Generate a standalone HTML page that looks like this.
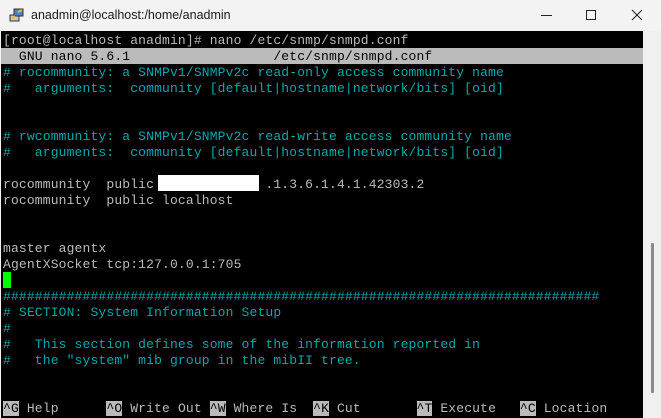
<!DOCTYPE html>
<html><head><meta charset="utf-8"><style>
html,body{margin:0;padding:0;width:661px;height:418px;overflow:hidden;background:#f3f3f3;}
#title{position:absolute;left:0;top:0;width:661px;height:31px;background:#f3f3f3;font-family:"Liberation Sans",sans-serif;font-size:12.5px;color:#1a1a1a;}
#title .t{position:absolute;left:31px;top:8px;}
#term{position:absolute;left:1px;top:31px;width:642px;height:387px;background:#000;overflow:hidden;}
pre{margin:0;position:absolute;left:2px;top:2px;font-family:"Liberation Mono",monospace;font-size:13px;letter-spacing:0.15px;line-height:16px;color:#bbbbbb;}
.c{color:#00aaaa}
.inv{background:#bbbbbb;color:#000}
#bar{position:absolute;left:0;top:17px;width:642px;height:16px;background:#bbbbbb;}
#sb{position:absolute;left:643px;top:31px;width:18px;height:387px;background:#f0f0f0;}
#thumb{position:absolute;left:651px;top:243px;width:3px;height:150px;background:#8a8a8a;border-radius:1px;}
</style></head><body>
<div id="title">
<svg style="position:absolute;left:9px;top:7px" width="16" height="16" viewBox="0 0 16 16">
<rect x="1" y="8" width="9" height="6" fill="#c8c8c8" stroke="#333" stroke-width="1"/>
<rect x="5" y="2" width="9" height="7" fill="#4a7fd0" stroke="#333" stroke-width="1"/>
<path d="M6 9 L3 12 M9 5 L13 3" stroke="#e8c030" stroke-width="2"/>
</svg>
<span class="t">anadmin@localhost:/home/anadmin</span>
<svg style="position:absolute;left:540px;top:9px" width="14" height="14"><path d="M1 6.5H12" stroke="#222" stroke-width="1"/></svg>
<svg style="position:absolute;left:585px;top:9px" width="14" height="14"><rect x="1.5" y="1.5" width="9" height="9" fill="none" stroke="#222" stroke-width="1"/></svg>
<svg style="position:absolute;left:631px;top:9px" width="14" height="14"><path d="M1 1L11 11M11 1L1 11" stroke="#222" stroke-width="1"/></svg>
</div>
<div id="term">
<div id="bar"></div>
<div style="position:absolute;left:157px;top:144px;width:101px;height:16px;background:#fff"></div>
<div style="position:absolute;left:2px;top:241px;width:8px;height:16px;background:#00ff00"></div>
<pre>[root@localhost anadmin]# nano /etc/snmp/snmpd.conf
<span style="color:#000">  GNU nano 5.6.1                  /etc/snmp/snmpd.conf</span>
<span class="c"># rocommunity: a SNMPv1/SNMPv2c read-only access community name</span>
<span class="c">#   arguments:  community [default|hostname|network/bits] [oid]</span>


<span class="c"># rwcommunity: a SNMPv1/SNMPv2c read-write access community name</span>
<span class="c">#   arguments:  community [default|hostname|network/bits] [oid]</span>

rocommunity  public              .1.3.6.1.4.1.42303.2
rocommunity  public localhost


master agentx
AgentXSocket tcp:127.0.0.1:705

<span class="c">###########################################################################</span>
<span class="c"># SECTION: System Information Setup</span>
<span class="c">#</span>
<span class="c">#   This section defines some of the information reported in</span>
<span class="c">#   the "system" mib group in the mibII tree.</span>


<span class="inv">^G</span> Help      <span class="inv">^O</span> Write Out <span class="inv">^W</span> Where Is  <span class="inv">^K</span> Cut       <span class="inv">^T</span> Execute   <span class="inv">^C</span> Location</pre>
</div>
<div id="sb"></div>
<div id="thumb"></div>
</body></html>
